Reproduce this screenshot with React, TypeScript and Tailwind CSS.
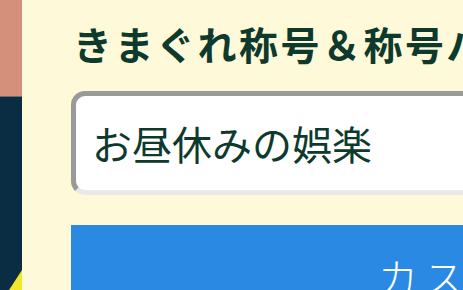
import React from "react";

export default function App() {
  return (
    <div className="flex h-[290px] w-[463px] overflow-hidden bg-[#fef9d8]" style={{ fontFamily: '"Noto Sans CJK JP", "Noto Sans", sans-serif' }}>
      <div className="relative flex w-[22px] shrink-0 flex-col overflow-hidden">
        <div className="h-[96px] bg-[#d4907a]" />
        <div className="h-px bg-[#6b6f78]" />
        <div className="flex-1 bg-[#0b2d43]" />
        <svg className="absolute bottom-0 left-0" width="22" height="30" viewBox="0 0 22 30">
          <polygon points="22,10 22,30 9,30" fill="#f2e62a" />
        </svg>
      </div>
      <div className="flex min-w-0 flex-1 flex-col pl-[49px] pt-[21px]">
        <h1 className="whitespace-nowrap pl-[2px] text-[39px] font-bold leading-[44px] tracking-[2.5px] text-[#0d3a2c]">
          きまぐれ称号＆称号バッジ
        </h1>
        <div className="mt-[26px] flex h-[104px] w-[460px] shrink-0 items-center rounded-[14px] border-[5px] border-b-[#e9e9e9] border-l-[#9a9a9a] border-r-[#e9e9e9] border-t-[#9a9a9a] bg-white pl-[16px]">
          <span className="whitespace-nowrap text-[40px] leading-none text-[#0d3a2c]">お昼休みの娯楽</span>
        </div>
        <div className="mt-[30px] flex h-[100px] w-[640px] shrink-0 items-start bg-[#2a8ae3] pl-[307px] pt-[31px]">
          <span className="whitespace-nowrap text-[40px] font-light leading-none tracking-[6px] text-white">カスタマイズ</span>
        </div>
      </div>
    </div>
  );
}
